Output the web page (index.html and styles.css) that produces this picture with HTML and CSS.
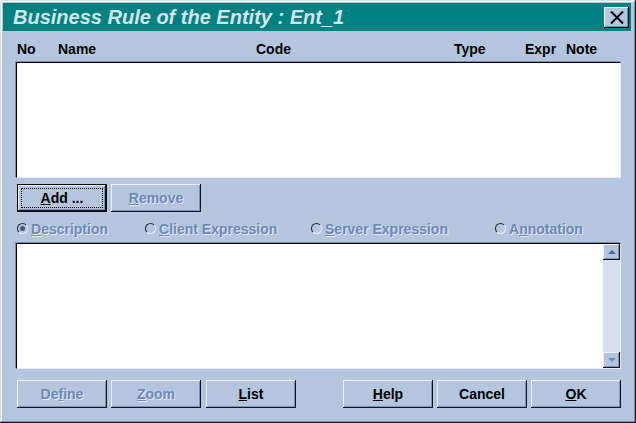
FILE: index.html
```html
<!DOCTYPE html>
<html>
<head>
    <title>Business Rule of the Entity</title>
    <link rel="stylesheet" href="styles.css">
</head>
<body>
    <div class="window">
        <div class="titlebar">
            <span class="title">Business Rule of the Entity : Ent_1</span>
            <button class="close">
                <svg width="14" height="13" viewBox="0 0 14 13">
                    <path d="M1 0.5 L13 12.5 M13 0.5 L1 12.5" stroke="#000" stroke-width="2" fill="none"/>
                </svg>
            </button>
        </div>

        <div class="content">
            <div class="columns">
                <span>No</span>
                <span>Name</span>
                <span>Code</span>
                <span>Type</span>
                <span>Expr</span>
                <span>Note</span>
            </div>
            <div class="listbox"></div>

            <div class="btn-row">
                <button class="btn default"><span class="focus"><span><u>A</u>dd ...</span></span></button>
                <button class="btn disabled"><u>R</u>emove</button>
            </div>

            <div class="radios">
                <label class="radio"><span class="dot checked"></span><span><u>D</u>escription</span></label>
                <label class="radio"><span class="dot"></span><span><u>C</u>lient Expression</span></label>
                <label class="radio"><span class="dot"></span><span><u>S</u>erver Expression</span></label>
                <label class="radio"><span class="dot"></span><span>A<u>n</u>notation</span></label>
            </div>

            <div class="editbox">
                <div class="text"></div>
                <div class="scrollbar">
                    <div class="arrow"><span class="up"></span></div>
                    <div class="arrow"><span class="down"></span></div>
                </div>
            </div>

            <div class="btn-row bottom">
                <button class="btn disabled">De<u>f</u>ine</button>
                <button class="btn disabled"><u>Z</u>oom</button>
                <button class="btn list"><u>L</u>ist</button>
                <button class="btn help"><u>H</u>elp</button>
                <button class="btn">Cancel</button>
                <button class="btn"><u>O</u>K</button>
            </div>
        </div>
    </div>
</body>
</html>
```

FILE: styles.css
```css
* {
    box-sizing: border-box;
    margin: 0;
    padding: 0;
}

body {
    font-family: "Liberation Sans", Arial, sans-serif;
    font-size: 14px;
    font-weight: bold;
    background-color: #b4c5de;
}

.window {
    width: 636px;
    height: 423px;
    padding: 3px 5px 3px 3px;
    background-color: #b4c5de;
    box-shadow: inset -1px -1px #10182a, inset 1px 1px #d6e0ee,
                inset -2px -2px #7a8cae, inset 2px 2px #ffffff;
}

.titlebar {
    display: flex;
    align-items: center;
    justify-content: space-between;
    height: 28px;
    padding: 0 2px 0 10px;
    background-color: #008080;
}

.title {
    color: #d4e4ee;
    font-size: 20px;
    font-style: italic;
    font-weight: bold;
}

.close {
    display: flex;
    align-items: center;
    justify-content: center;
    width: 25px;
    height: 21px;
    border: none;
    background-color: #b4c5de;
    box-shadow: inset -1px -1px #000000, inset 1px 1px #ffffff,
                inset -2px -2px #7a8cae;
}

.content {
    padding: 4px 10px 0 13px;
}

.columns {
    display: grid;
    grid-template-columns: 41px 198px 198px 71px 41px 1fr;
    align-items: center;
    height: 27px;
    padding-left: 1px;
    color: #000;
}

.listbox {
    height: 116px;
    background-color: #fff;
    border-top: 1px solid #000;
    border-left: 1px solid #000;
    border-right: 1px solid #e6edf6;
    border-bottom: 1px solid #e6edf6;
    box-shadow: -1px -1px #7a8cae;
}

.btn-row {
    display: flex;
    gap: 4px;
    margin-top: 6px;
    padding-left: 1px;
}

.btn {
    width: 90px;
    height: 28px;
    border: none;
    background-color: #b4c5de;
    font-family: "Liberation Sans", Arial, sans-serif;
    font-size: 14px;
    font-weight: bold;
    color: #000;
    box-shadow: inset -1px -1px #0c1428, inset 1px 1px #eef3fa,
                inset -2px -2px #8092b4;
}

.btn.default {
    display: flex;
    align-items: center;
    justify-content: center;
    padding: 4px;
    box-shadow: inset 0 0 0 1px #000, inset -2px -2px #0c1428,
                inset 2px 2px #eef3fa, inset -3px -3px #8092b4;
}

.focus {
    display: flex;
    align-items: center;
    justify-content: center;
    width: 100%;
    height: 100%;
    border: 1px dotted #000;
}

.btn.disabled {
    color: #6f88b6;
    text-shadow: 1px 1px #e4ebf5;
}

.radios {
    display: grid;
    grid-template-columns: 128px 166px 184px 1fr;
    align-items: center;
    height: 31px;
    padding: 2px 0 0 1px;
    color: #6f88b6;
    text-shadow: 1px 1px #e4ebf5;
}

.radio {
    display: flex;
    align-items: center;
    gap: 3px;
}

.dot {
    position: relative;
    width: 11px;
    height: 11px;
    border-radius: 50%;
    border: 1px solid;
    border-color: #20283a #e8eef8 #e8eef8 #20283a;
}

.dot.checked::after {
    content: "";
    position: absolute;
    left: 2px;
    top: 2px;
    width: 5px;
    height: 5px;
    border-radius: 50%;
    background-color: #4a5872;
}

.editbox {
    display: flex;
    height: 126px;
    background-color: #fff;
    border-top: 1px solid #000;
    border-left: 1px solid #000;
    border-right: 1px solid #e6edf6;
    border-bottom: 1px solid #e6edf6;
    box-shadow: -1px -1px #7a8cae;
}

.text {
    flex: 1;
}

.scrollbar {
    display: flex;
    flex-direction: column;
    justify-content: space-between;
    width: 17px;
    background-color: #d6e0ee;
}

.arrow {
    display: flex;
    align-items: center;
    justify-content: center;
    height: 16px;
    background-color: #b4c5de;
    box-shadow: inset -1px -1px #0c1428, inset 1px 1px #eef3fa,
                inset -2px -2px #8092b4;
}

.up {
    border-left: 4px solid transparent;
    border-right: 4px solid transparent;
    border-bottom: 4px solid #4c6a9c;
}

.down {
    border-left: 4px solid transparent;
    border-right: 4px solid transparent;
    border-top: 4px solid #6f88b6;
}

.btn-row.bottom {
    margin-top: 11px;
}

.btn.list {
    margin-left: 1px;
}

.btn.help {
    margin-left: auto;
}
```
